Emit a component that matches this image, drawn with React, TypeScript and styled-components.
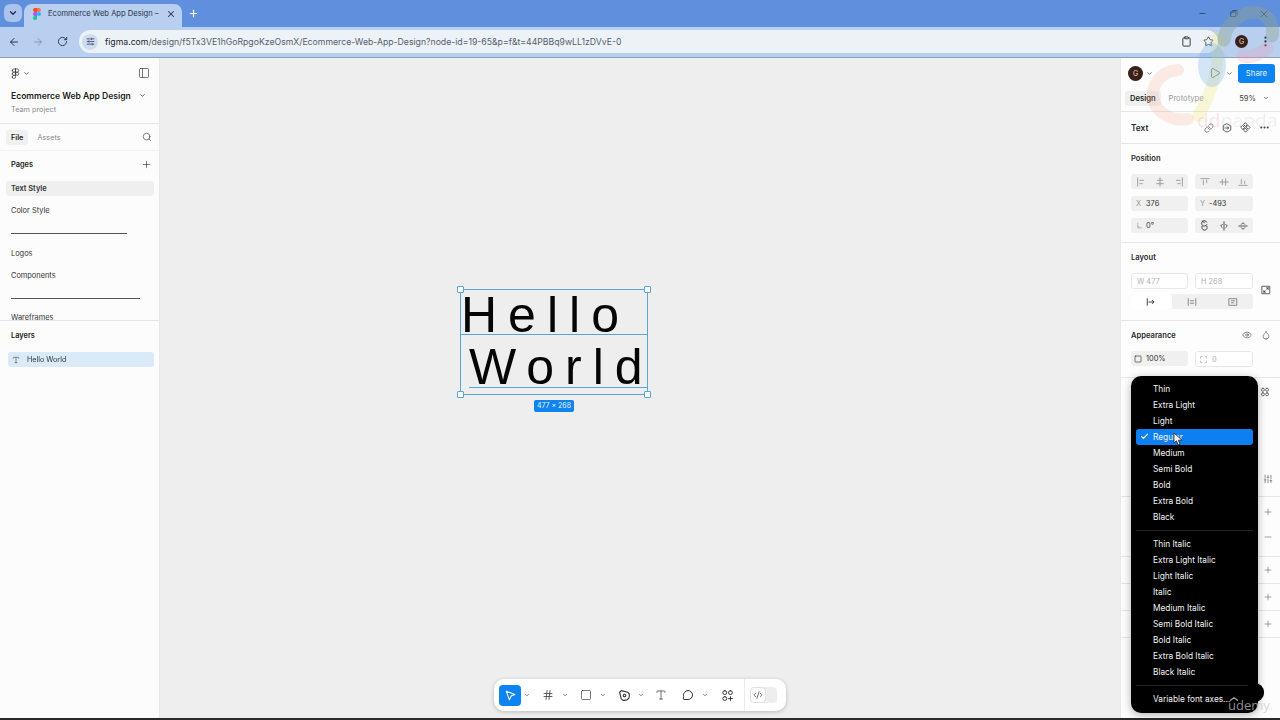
import React from "react";
import styled, { createGlobalStyle } from "styled-components";
import {
  ArrowLeft, ArrowRight, RotateCw, SlidersHorizontal, Clipboard, Star, EllipsisVertical,
  Minus, X, Plus, ChevronDown, Figma, PanelLeft, Search, Type, Play, Link, Ellipsis, Eye,
  Droplet, Check, SlidersVertical, Hash, Square, CodeXml,
} from "lucide-react";

const GlobalStyle = createGlobalStyle`
  html, body { margin: 0; padding: 0; width: 1280px; height: 720px; overflow: hidden; background: #eee; }
  #root { width: 1280px; height: 720px; }
  * { box-sizing: border-box; }
`;

const Page = styled.div`
  position: relative;
  width: 1280px;
  height: 720px;
  display: flex;
  flex-direction: column;
  overflow: hidden;
  font-family: Inter, "Liberation Sans", sans-serif;
  color: #222;
  filter: blur(0.35px);
`;

/* ---------- browser chrome ---------- */
const TabStrip = styled.div`
  height: 27px;
  background: #5f8fdd;
  display: flex;
  align-items: flex-end;
  padding: 0 1px 0 4px;
  flex: none;
`;
const TabMenu = styled.div`
  width: 18px;
  height: 18px;
  margin-bottom: 5px;
  border-radius: 6px;
  background: #a9c3ec;
  display: flex;
  align-items: center;
  justify-content: center;
  color: #1d2b45;
`;
const ActiveTab = styled.div`
  width: 158px;
  height: 23px;
  margin-left: 2px;
  padding: 0 6px 4px 9px;
  background: #b8cff0;
  border-radius: 8px 8px 0 0;
  display: flex;
  align-items: center;
  gap: 7px;
  font-size: 7.6px;
  color: #2a3446;
  white-space: nowrap;
`;
const TabTitle = styled.span`
  flex: 1;
`;
const NewTab = styled.div`
  margin: 0 0 8px 6px;
  color: #fff;
  display: flex;
`;
const WindowButtons = styled.div`
  margin-left: auto;
  display: flex;
  align-items: center;
  height: 27px;
  color: #2c3a55;
`;
const WindowButton = styled.div`
  width: 30.5px;
  display: flex;
  justify-content: center;
`;
const NavBar = styled.div`
  height: 31px;
  background: #b8cff0;
  border-bottom: 1px solid #8b9fc0;
  display: flex;
  align-items: center;
  flex: none;
  padding: 0 6px 1px 0;
`;
const NavButton = styled.div<{ $w: number; $muted?: boolean }>`
  width: ${(p) => p.$w}px;
  display: flex;
  justify-content: center;
  color: ${(p) => (p.$muted ? "#7b8aa5" : "#26344e")};
`;
const AddressBar = styled.div`
  margin-left: 3px;
  width: 1139px;
  height: 23px;
  border-radius: 12px;
  background: #edf2f7;
  display: flex;
  align-items: center;
  padding: 0 3px;
  font-size: 8.7px;
  color: #55606f;
  flex: none;
`;
const SiteChip = styled.div`
  width: 16px;
  height: 16px;
  border-radius: 50%;
  background: #cfdcee;
  display: flex;
  align-items: center;
  justify-content: center;
  color: #26344e;
  margin: 0 7px 0 0;
`;
const Host = styled.span`
  color: #1c2230;
`;
const BarIcons = styled.div`
  margin-left: auto;
  display: flex;
  align-items: center;
  gap: 11px;
  padding-right: 1px;
  color: #27303f;
`;
const Avatar = styled.div<{ $size: number }>`
  width: ${(p) => p.$size}px;
  height: ${(p) => p.$size}px;
  border-radius: 50%;
  background: #3a1f17;
  color: #e7d8cf;
  font-size: 7px;
  display: flex;
  align-items: center;
  justify-content: center;
  flex: none;
`;

/* ---------- workspace ---------- */
const Workspace = styled.div`
  flex: 1;
  display: flex;
  min-height: 0;
`;
const BottomEdge = styled.div`
  height: 2px;
  background: #2a2a2a;
  flex: none;
`;
const LeftPanel = styled.aside`
  width: 160px;
  flex: none;
  background: #fcfcfc;
  border-right: 1px solid #e8e8e8;
  display: flex;
  flex-direction: column;
`;
const LogoRow = styled.div`
  height: 30px;
  padding: 0 9px 0 10px;
  display: flex;
  align-items: center;
  color: #333;
`;
const PushRight = styled.div<{ $gap?: number }>`
  margin-left: auto;
  display: flex;
  align-items: center;
  gap: ${(p) => p.$gap ?? 8}px;
`;
const FileTitle = styled.div`
  height: 15px;
  padding: 0 13px 0 11px;
  display: flex;
  align-items: center;
  font-size: 8.55px;
  font-weight: 600;
  color: #1c1c1c;
  white-space: nowrap;
`;
const TeamName = styled.div`
  height: 14px;
  padding-left: 11px;
  font-size: 7.3px;
  line-height: 14px;
  color: #8a8a8a;
`;
const PanelTabs = styled.div`
  margin-top: 6px;
  height: 28px;
  border-top: 1px solid #e6e6e6;
  border-bottom: 1px solid #f1f1f1;
  padding: 0 7px 0 6px;
  display: flex;
  align-items: center;
  font-size: 7.3px;
  color: #8a8a8a;
`;
const PanelTab = styled.div<{ $active?: boolean }>`
  height: 15px;
  padding: 0 5px;
  margin-right: 4px;
  border-radius: 3px;
  display: flex;
  align-items: center;
  font-weight: ${(p) => (p.$active ? 600 : 400)};
  background: ${(p) => (p.$active ? "#f0f0f0" : "transparent")};
  color: ${(p) => (p.$active ? "#222" : "#8a8a8a")};
`;
const SideHeading = styled.div<{ $h: number }>`
  height: ${(p) => p.$h}px;
  padding: 0 7px 0 11px;
  display: flex;
  align-items: center;
  font-size: 7.4px;
  font-weight: 600;
  color: #222;
`;
const PageList = styled.div`
  height: 143px;
  overflow: hidden;
  padding: 3px 5px 0 6px;
  border-bottom: 1px solid #e6e6e6;
  display: flex;
  flex-direction: column;
`;
const PageItem = styled.div<{ $active?: boolean }>`
  height: 15px;
  flex: none;
  margin-bottom: 7px;
  padding-left: 5px;
  border-radius: 3px;
  font-size: 7.4px;
  line-height: 15px;
  font-weight: ${(p) => (p.$active ? 600 : 400)};
  background: ${(p) => (p.$active ? "#efefef" : "transparent")};
  color: #333;
`;
const PageRule = styled.div<{ $w: number }>`
  width: ${(p) => p.$w}px;
  height: 1px;
  flex: none;
  margin: 8px 0 11.5px 5px;
  background: #555;
`;
const LayerRow = styled.div`
  height: 15px;
  margin: 3px 5px 0 8px;
  padding-left: 4px;
  border-radius: 3px;
  background: #daeaf8;
  display: flex;
  align-items: center;
  gap: 7px;
  font-size: 7.2px;
  color: #333;
`;

/* ---------- canvas ---------- */
const Canvas = styled.main`
  flex: 1;
  position: relative;
  background: #eeeeee;
`;
const TextNode = styled.div`
  position: absolute;
  left: 300px;
  top: 231px;
  width: 188px;
  height: 106px;
  border: 1px solid #58a5d6;
  font-family: "Liberation Sans", Arial, sans-serif;
  font-size: 50px;
  color: #050505;
`;
const TextLine = styled.div<{ $indent: number; $h: number; $drop: number }>`
  height: ${(p) => p.$h}px;
  margin-left: ${(p) => p.$indent}px;
  line-height: ${(p) => p.$h + p.$drop * 2}px;
  letter-spacing: 11px;
  white-space: nowrap;
  border-bottom: 1px solid #58a5d6;
`;
const Handle = styled.span<{ $x: "l" | "r"; $y: "t" | "b" }>`
  position: absolute;
  width: 7px;
  height: 7px;
  background: #fff;
  border: 1px solid #58a5d6;
  border-radius: 1px;
  ${(p) => (p.$x === "l" ? "left: -4px;" : "right: -4px;")}
  ${(p) => (p.$y === "t" ? "top: -4px;" : "bottom: -4px;")}
`;
const SizeTag = styled.div`
  position: absolute;
  left: 73px;
  top: 110px;
  width: 40px;
  height: 12px;
  border-radius: 2px;
  background: #0d84ef;
  color: #e8f3ff;
  font-family: Inter, sans-serif;
  font-size: 7px;
  line-height: 12px;
  text-align: center;
`;
const ToolBar = styled.div`
  position: absolute;
  left: 50%;
  bottom: 7px;
  transform: translateX(-50%);
  width: 292px;
  height: 32px;
  padding: 0 8px 0 5px;
  background: #fff;
  border-radius: 10px;
  box-shadow: 0 1px 4px rgba(0, 0, 0, 0.22);
  display: flex;
  align-items: center;
  color: #333;
`;
const ToolGroup = styled.div<{ $w: number }>`
  width: ${(p) => p.$w}px;
  display: flex;
  align-items: center;
  flex: none;
`;
const ToolIcon = styled.div<{ $active?: boolean }>`
  width: 22px;
  height: 21px;
  border-radius: 4px;
  display: flex;
  align-items: center;
  justify-content: center;
  flex: none;
  background: ${(p) => (p.$active ? "#0d84ef" : "transparent")};
  color: ${(p) => (p.$active ? "#fff" : "#333")};
`;
const ToolChevron = styled.div`
  width: 11px;
  display: flex;
  justify-content: center;
  color: #555;
`;
const ToolDivider = styled.div`
  width: 1px;
  height: 32px;
  background: #ececec;
  margin: 0 5px 0 6px;
  flex: none;
`;
const CodeToggle = styled.div`
  width: 27px;
  height: 16px;
  border-radius: 4px;
  background: #eee;
  flex: none;
`;
const CodeKnob = styled.div`
  width: 16px;
  height: 16px;
  border-radius: 4px;
  background: #fff;
  border: 1px solid #e0e0e0;
  display: flex;
  align-items: center;
  justify-content: center;
  color: #333;
`;

/* ---------- right panel ---------- */
const RightPanel = styled.aside`
  width: 160px;
  flex: none;
  position: relative;
  background: #fdfdfd;
  border-left: 1px solid #e8e8e8;
  display: flex;
  flex-direction: column;
`;
const TopActions = styled.div`
  height: 30px;
  padding: 0 5px 0 7px;
  display: flex;
  align-items: center;
  gap: 3px;
  color: #444;
`;
const ShareButton = styled.div`
  width: 37px;
  height: 19px;
  border-radius: 3px;
  background: #0d84ef;
  color: #e6f3ff;
  font-size: 7.8px;
  display: flex;
  align-items: center;
  justify-content: center;
`;
const ModeTabs = styled.div`
  height: 24px;
  padding: 0 11px 3px 4px;
  display: flex;
  align-items: center;
  border-bottom: 1px solid #e6e6e6;
  font-size: 7.6px;
  color: #444;
`;
const ModeTab = styled.div<{ $active?: boolean }>`
  height: 15px;
  padding: 0 5px;
  margin-right: 3px;
  border-radius: 3px;
  display: flex;
  align-items: center;
  font-weight: ${(p) => (p.$active ? 600 : 400)};
  background: ${(p) => (p.$active ? "#f0f0f0" : "transparent")};
  color: ${(p) => (p.$active ? "#222" : "#999")};
`;
const SelectionRow = styled.div`
  height: 32px;
  padding: 0 10px 0 10px;
  display: flex;
  align-items: center;
  border-bottom: 1px solid #e6e6e6;
  font-size: 8.3px;
  font-weight: 600;
  color: #2a2a2a;
`;
const SelectionIcons = styled.div`
  margin-left: auto;
  display: flex;
  align-items: center;
  gap: 8px;
  color: #444;
`;
const Section = styled.section<{ $h: number }>`
  height: ${(p) => p.$h}px;
  padding: 7px 6px 0 10px;
  border-bottom: 1px solid #e6e6e6;
  flex: none;
`;
const SectionTitle = styled.div`
  height: 14px;
  display: flex;
  align-items: center;
  font-size: 7.6px;
  font-weight: 600;
  color: #2a2a2a;
`;
const FieldGrid = styled.div<{ $top: number }>`
  display: grid;
  grid-template-columns: 57px 58px;
  column-gap: 7px;
  row-gap: 7px;
  margin-top: ${(p) => p.$top}px;
`;
const SegGroup = styled.div`
  height: 15px;
  border-radius: 3px;
  background: #f0f0f0;
  display: grid;
  grid-template-columns: repeat(3, 1fr);
  align-items: center;
  justify-items: center;
  color: #8f8f8f;
`;
const DarkSegGroup = styled(SegGroup)`
  color: #333;
`;
const Field = styled.div<{ $outlined?: boolean; $dim?: boolean; $pad?: number; $gap?: number }>`
  height: ${(p) => (p.$outlined ? 16 : 15)}px;
  border-radius: 3px;
  padding-left: ${(p) => p.$pad ?? 5}px;
  display: flex;
  align-items: center;
  gap: ${(p) => p.$gap ?? 5}px;
  font-size: 7.4px;
  background: ${(p) => (p.$outlined ? "#fff" : "#f0f0f0")};
  border: ${(p) => (p.$outlined ? "1px solid #e8e8e8" : "none")};
  color: ${(p) => (p.$dim ? "#b0b0b0" : "#333")};
`;
const FieldTag = styled.span`
  color: #999;
  display: flex;
`;
const RowWithAside = styled.div`
  position: relative;
  width: 122px;
`;
const Aside = styled.div<{ $top: number }>`
  position: absolute;
  right: -18px;
  top: ${(p) => p.$top}px;
  color: #444;
  display: flex;
`;
const LayoutSeg = styled.div`
  width: 122px;
  height: 15px;
  margin-top: 5px;
  border-radius: 3px;
  background: #f0f0f0;
  display: grid;
  grid-template-columns: repeat(3, 1fr);
  align-items: center;
  justify-items: center;
  color: #777;
`;
const LayoutOption = styled.div<{ $active?: boolean }>`
  width: 100%;
  height: 100%;
  border-radius: 3px;
  display: flex;
  align-items: center;
  justify-content: center;
  background: ${(p) => (p.$active ? "#fff" : "transparent")};
  color: ${(p) => (p.$active ? "#222" : "#777")};
`;
const AppearanceIcons = styled.div`
  margin-left: auto;
  margin-right: 3px;
  display: flex;
  align-items: center;
  gap: 9px;
  color: #444;
`;
const StackedIcons = styled.div<{ $top: number; $gap: number }>`
  display: flex;
  flex-direction: column;
  align-items: flex-end;
  padding: ${(p) => p.$top}px 1px 0 0;
  gap: ${(p) => p.$gap}px;
  color: #555;
`;
const AppsIcon = styled.div`
  margin-right: 3px;
  display: flex;
`;

/* ---------- font-style menu ---------- */
const StyleMenu = styled.div`
  position: absolute;
  left: 10px;
  top: 318px;
  width: 127px;
  height: 337px;
  padding: 5px 0 6px;
  border-radius: 10px;
  background: #000;
  box-shadow: 0 2px 8px rgba(0, 0, 0, 0.3);
  color: #f2f2f2;
  font-size: 8.3px;
`;
const MenuItem = styled.div<{ $selected?: boolean }>`
  position: relative;
  height: 16px;
  margin: 0 5px;
  padding-left: 17px;
  line-height: 16px;
  border-radius: 3px;
  white-space: nowrap;
  background: ${(p) => (p.$selected ? "#0d7ff0" : "transparent")};
`;
const MenuCheck = styled.span`
  position: absolute;
  left: 4px;
  top: 3px;
  display: flex;
  color: #fff;
`;
const MenuRule = styled.div`
  height: 1px;
  margin: 5px 5px 5.2px;
  background: #242424;
`;
const Cursor = styled.svg`
  position: absolute;
  left: 1173px;
  top: 432px;
`;

/* ---------- video watermarks ---------- */
const LogoMark = styled.svg`
  position: absolute;
  left: 1140px;
  top: 0;
  pointer-events: none;
`;
const BrandText = styled.div`
  position: absolute;
  left: 1197px;
  top: 109px;
  font-family: "Open Sans", sans-serif;
  font-size: 19px;
  line-height: 22px;
  letter-spacing: 0.2px;
  pointer-events: none;
`;
const BrandDd = styled.span`
  color: rgba(240, 120, 120, 0.2);
`;
const BrandRest = styled.span`
  color: rgba(120, 120, 120, 0.11);
`;
const UdemyBump = styled.div`
  position: absolute;
  left: 1245px;
  top: 683px;
  width: 19px;
  height: 19px;
  border-radius: 9px;
  background: #000;
`;
const UdemyMark = styled.div`
  position: absolute;
  left: 1228px;
  top: 697px;
  font-family: "Open Sans", sans-serif;
  font-size: 13px;
  line-height: 16px;
  color: rgba(200, 200, 200, 0.72);
`;
const UdemyHat = styled.svg`
  position: absolute;
  left: 1229px;
  top: 697px;
`;

/* ---------- small drawn icons ---------- */
const Glyph: React.FC<{ d: string; size?: number; vb?: number; sw?: number }> = ({ d, size = 10, vb = 12, sw = 1 }) => (
  <svg width={size} height={size} viewBox={`0 0 ${vb} ${vb}`} fill="none" stroke="currentColor" strokeWidth={sw} strokeLinecap="round" strokeLinejoin="round">
    <path d={d} />
  </svg>
);

const FigmaFavicon = () => (
  <svg width="8" height="12" viewBox="0 0 8 12">
    <path d="M0 2a2 2 0 0 1 2-2h2v4H2a2 2 0 0 1-2-2z" fill="#f24e1e" />
    <path d="M4 0h2a2 2 0 0 1 0 4H4z" fill="#ff7262" />
    <path d="M0 6a2 2 0 0 1 2-2h2v4H2a2 2 0 0 1-2-2z" fill="#a259ff" />
    <circle cx="6" cy="6" r="2" fill="#1abcfe" />
    <path d="M0 10a2 2 0 0 1 2-2h2v2a2 2 0 0 1-4 0z" fill="#0acf83" />
  </svg>
);

const RESTORE = "M3 4h6v6H3z M5 2h5a1 1 0 0 1 1 1v5";
const ICONS = {
  alignL: "M2 1v10 M4.5 4H9 M4.5 8H7.5",
  alignC: "M6 1v10 M3 4h6 M2 8h8",
  alignR: "M10 1v10 M3 4h4.5 M4.5 8h3",
  alignT: "M1 2h10 M4 4v5 M8 4v3",
  alignM: "M1 6h10 M4 3v6 M8 2v8",
  alignB: "M1 10h10 M4 3v5 M8 5v3",
  angle: "M3 2v8h7 M3 7a3 3 0 0 1 3 3",
  rotate: "M3.5 1 6 3 M8.6 2.4A3 3 0 1 0 8.6 5 M3.4 6.6a3 3 0 1 0 5.2 0",
  flipH: "M6 1v10 M4 4 2 6l2 2 M8 4l2 2-2 2",
  flipV: "M1 6h10 M4 4l2-2 2 2 M4 8l2 2 2-2",
  resize: "M1.5 1.5h9v9h-9z M3.5 8.5l1.5-1.5 M3.5 8.5h2 M3.5 8.5v-2 M8.5 3.5 7 5 M8.5 3.5h-2 M8.5 3.5v2",
  hug: "M1.5 2v8 M3.5 6h6 M7.5 4l2 2-2 2",
  fill: "M1.5 2v8 M10.5 2v8 M4 4.5h4 M4 7.5h4",
  fixed: "M1.5 2h9v8h-9z M4 4.5h4 M4 7h3",
  opacity: "M2.5 1.5h7a1 1 0 0 1 1 1v7a1 1 0 0 1-1 1h-7a1 1 0 0 1-1-1v-7a1 1 0 0 1 1-1z",
  corners: "M2 4V2h2 M8 2h2v2 M10 8v2H8 M4 10H2V8",
  apps: "M3.5 1.5a1.8 1.8 0 1 1 0 3.6a1.8 1.8 0 1 1 0-3.6z M8.5 1.5a1.8 1.8 0 1 1 0 3.6a1.8 1.8 0 1 1 0-3.6z M3.5 6.9a1.8 1.8 0 1 1 0 3.6a1.8 1.8 0 1 1 0-3.6z M8.5 6.9a1.8 1.8 0 1 1 0 3.6a1.8 1.8 0 1 1 0-3.6z",
  detach: "M6 1 10.5 3.5v5L6 11 1.5 8.5v-5z M3.5 6H8 M6.5 4.5 8 6 6.5 7.5",
  comp: "M6 1 8 3 6 5 4 3z M3 4 5 6 3 8 1 6z M9 4l2 2-2 2-2-2z M6 7l2 2-2 2-2-2z",
  bubble: "M6 1.5a4.5 4.5 0 0 1 0 9H2c-.6 0-.8-.5-.7-1l.4-2A4.5 4.5 0 0 1 6 1.5z",
  pen: "M3 1.5 9 3a3 3 0 0 1 1.5 3L10 8.5 8.5 10 6 10.5A3 3 0 0 1 3 9L1.5 3z M6 6m-1.2 0a1.2 1.2 0 1 0 2.4 0a1.2 1.2 0 1 0-2.4 0",
  widgets: "M3.5 1.5a1.8 1.8 0 1 1 0 3.6a1.8 1.8 0 1 1 0-3.6z M8.7 1.5a1.8 1.8 0 1 1 0 3.6a1.8 1.8 0 1 1 0-3.6z M3.5 7a1.8 1.8 0 1 1 0 3.6a1.8 1.8 0 1 1 0-3.6z M8.7 7v3.6 M6.9 8.8h3.6",
  pointer: "M2 2l8 3-3.4 1.4L5 10z",
};

const App: React.FC = () => {
  const upright = ["Thin", "Extra Light", "Light", "Regular", "Medium", "Semi Bold", "Bold", "Extra Bold", "Black"];
  const italic = ["Thin Italic", "Extra Light Italic", "Light Italic", "Italic", "Medium Italic", "Semi Bold Italic", "Bold Italic", "Extra Bold Italic", "Black Italic"];
  return (
    <Page>
      <GlobalStyle />
      <TabStrip>
        <TabMenu><ChevronDown size={10} strokeWidth={3} /></TabMenu>
        <ActiveTab>
          <FigmaFavicon />
          <TabTitle>Ecommerce Web App Design –</TabTitle>
          <X size={10} strokeWidth={2.5} />
        </ActiveTab>
        <NewTab><Plus size={11} strokeWidth={2.5} /></NewTab>
        <WindowButtons>
          <WindowButton><Minus size={9} /></WindowButton>
          <WindowButton><Glyph d={RESTORE} size={9} /></WindowButton>
          <WindowButton><X size={12} strokeWidth={1.5} /></WindowButton>
        </WindowButtons>
      </TabStrip>
      <NavBar>
        <NavButton $w={28}><ArrowLeft size={12} strokeWidth={2} /></NavButton>
        <NavButton $w={20} $muted><ArrowRight size={12} strokeWidth={1.6} /></NavButton>
        <NavButton $w={28}><RotateCw size={11} strokeWidth={2} /></NavButton>
        <AddressBar>
          <SiteChip><SlidersHorizontal size={9} strokeWidth={2} /></SiteChip>
          <Host>figma.com</Host>/design/f5Tx3VE1hGoRpgoKzeOsmX/Ecommerce-Web-App-Design?node-id=19-65&amp;p=f&amp;t=44PBBq9wLL1zDVvE-0
          <BarIcons>
            <Clipboard size={11} />
            <Star size={11} strokeWidth={1.6} />
          </BarIcons>
        </AddressBar>
        <PushRight>
          <Avatar $size={13}>G</Avatar>
          <NavButton $w={18}><EllipsisVertical size={13} strokeWidth={2.2} /></NavButton>
        </PushRight>
      </NavBar>

      <Workspace>
        <LeftPanel>
          <LogoRow>
            <Figma size={11} strokeWidth={1.5} />
            <ChevronDown size={7} strokeWidth={2.5} style={{ marginLeft: 2 }} />
            <PushRight><PanelLeft size={12} strokeWidth={1.3} /></PushRight>
          </LogoRow>
          <FileTitle>
            Ecommerce Web App Design
            <PushRight><ChevronDown size={7} strokeWidth={2.5} /></PushRight>
          </FileTitle>
          <TeamName>Team project</TeamName>
          <PanelTabs>
            <PanelTab $active>File</PanelTab>
            <PanelTab>Assets</PanelTab>
            <PushRight><Search size={10} strokeWidth={1.5} color="#333" /></PushRight>
          </PanelTabs>
          <SideHeading $h={27}>
            Pages
            <PushRight><Plus size={11} strokeWidth={1.3} /></PushRight>
          </SideHeading>
          <PageList>
            <PageItem $active>Text Style</PageItem>
            <PageItem>Color Style</PageItem>
            <PageRule $w={116} />
            <PageItem>Logos</PageItem>
            <PageItem>Components</PageItem>
            <PageRule $w={129} />
            <PageItem>Wareframes</PageItem>
          </PageList>
          <SideHeading $h={28}>Layers</SideHeading>
          <LayerRow>
            <Type size={8} strokeWidth={1.5} />
            Hello World
          </LayerRow>
        </LeftPanel>

        <Canvas>
          <TextNode>
            <TextLine $indent={0} $h={45} $drop={3}>Hello</TextLine>
            <TextLine $indent={8} $h={53} $drop={6}>World</TextLine>
            <Handle $x="l" $y="t" />
            <Handle $x="r" $y="t" />
            <Handle $x="l" $y="b" />
            <Handle $x="r" $y="b" />
            <SizeTag>477 × 268</SizeTag>
          </TextNode>
          <ToolBar>
            <ToolGroup $w={38}>
              <ToolIcon $active><Glyph d={ICONS.pointer} size={13} /></ToolIcon>
              <ToolChevron><ChevronDown size={6} strokeWidth={3} /></ToolChevron>
            </ToolGroup>
            <ToolGroup $w={38}>
              <ToolIcon><Hash size={12} strokeWidth={1.5} /></ToolIcon>
              <ToolChevron><ChevronDown size={6} strokeWidth={3} /></ToolChevron>
            </ToolGroup>
            <ToolGroup $w={38}>
              <ToolIcon><Square size={12} strokeWidth={1.3} /></ToolIcon>
              <ToolChevron><ChevronDown size={6} strokeWidth={3} /></ToolChevron>
            </ToolGroup>
            <ToolGroup $w={37}>
              <ToolIcon><Glyph d={ICONS.pen} size={13} /></ToolIcon>
              <ToolChevron><ChevronDown size={6} strokeWidth={3} /></ToolChevron>
            </ToolGroup>
            <ToolGroup $w={27}>
              <ToolIcon><Type size={12} strokeWidth={1.4} /></ToolIcon>
            </ToolGroup>
            <ToolGroup $w={39}>
              <ToolIcon><Glyph d={ICONS.bubble} size={12} /></ToolIcon>
              <ToolChevron><ChevronDown size={6} strokeWidth={3} /></ToolChevron>
            </ToolGroup>
            <ToolGroup $w={22}>
              <ToolIcon><Glyph d={ICONS.widgets} size={13} sw={0.9} /></ToolIcon>
            </ToolGroup>
            <ToolDivider />
            <CodeToggle>
              <CodeKnob><CodeXml size={10} strokeWidth={1.6} /></CodeKnob>
            </CodeToggle>
          </ToolBar>
        </Canvas>

        <RightPanel>
          <TopActions>
            <Avatar $size={15}>G</Avatar>
            <ChevronDown size={7} strokeWidth={2.5} />
            <PushRight $gap={5}>
              <Play size={12} strokeWidth={1.4} />
              <ChevronDown size={7} strokeWidth={2.5} />
              <ShareButton>Share</ShareButton>
            </PushRight>
          </TopActions>
          <ModeTabs>
            <ModeTab $active>Design</ModeTab>
            <ModeTab>Prototype</ModeTab>
            <PushRight $gap={7}>59%<ChevronDown size={6} strokeWidth={3} /></PushRight>
          </ModeTabs>
          <SelectionRow>
            Text
            <SelectionIcons>
              <Link size={10} strokeWidth={1.5} />
              <Glyph d={ICONS.detach} size={10} />
              <Glyph d={ICONS.comp} size={11} />
              <Ellipsis size={11} strokeWidth={2.5} />
            </SelectionIcons>
          </SelectionRow>
          <Section $h={99}>
            <SectionTitle>Position</SectionTitle>
            <FieldGrid $top={9}>
              <SegGroup>
                <Glyph d={ICONS.alignL} />
                <Glyph d={ICONS.alignC} />
                <Glyph d={ICONS.alignR} />
              </SegGroup>
              <SegGroup>
                <Glyph d={ICONS.alignT} />
                <Glyph d={ICONS.alignM} />
                <Glyph d={ICONS.alignB} />
              </SegGroup>
              <Field><FieldTag>X</FieldTag>376</Field>
              <Field $gap={4}><FieldTag>Y</FieldTag>-493</Field>
              <Field $gap={3}><FieldTag><Glyph d={ICONS.angle} size={7} /></FieldTag>0°</Field>
              <DarkSegGroup>
                <Glyph d={ICONS.rotate} size={11} />
                <Glyph d={ICONS.flipH} />
                <Glyph d={ICONS.flipV} />
              </DarkSegGroup>
            </FieldGrid>
          </Section>
          <Section $h={78}>
            <SectionTitle>Layout</SectionTitle>
            <RowWithAside>
              <FieldGrid $top={9}>
                <Field $outlined $dim>W 477</Field>
                <Field $outlined $dim>H 268</Field>
              </FieldGrid>
              <Aside $top={12}><Glyph d={ICONS.resize} /></Aside>
            </RowWithAside>
            <LayoutSeg>
              <LayoutOption $active><Glyph d={ICONS.hug} /></LayoutOption>
              <LayoutOption><Glyph d={ICONS.fill} /></LayoutOption>
              <LayoutOption><Glyph d={ICONS.fixed} /></LayoutOption>
            </LayoutSeg>
          </Section>
          <Section $h={57}>
            <SectionTitle>
              Appearance
              <AppearanceIcons>
                <Eye size={10} strokeWidth={1.4} />
                <Droplet size={10} strokeWidth={1.4} />
              </AppearanceIcons>
            </SectionTitle>
            <FieldGrid $top={9}>
              <Field $pad={3} $gap={4}><Glyph d={ICONS.opacity} size={8} />100%</Field>
              <Field $outlined $dim $pad={3} $gap={4}><Glyph d={ICONS.corners} size={9} />0</Field>
            </FieldGrid>
          </Section>
          <Section $h={119}>
            <StackedIcons $top={2} $gap={77}>
              <AppsIcon><Glyph d={ICONS.apps} /></AppsIcon>
              <SlidersVertical size={10} strokeWidth={1.5} />
            </StackedIcons>
          </Section>
          <Section $h={60}>
            <StackedIcons $top={3} $gap={15}>
              <Plus size={10} strokeWidth={1.3} />
              <Minus size={10} strokeWidth={1.3} />
            </StackedIcons>
          </Section>
          <Section $h={27}><StackedIcons $top={1} $gap={0}><Plus size={10} strokeWidth={1.3} /></StackedIcons></Section>
          <Section $h={27}><StackedIcons $top={1} $gap={0}><Plus size={10} strokeWidth={1.3} /></StackedIcons></Section>
          <Section $h={27}><StackedIcons $top={1} $gap={0}><Plus size={10} strokeWidth={1.3} /></StackedIcons></Section>

          <StyleMenu>
            {upright.map((name) => (
              <MenuItem key={name} $selected={name === "Regular"}>
                {name === "Regular" && <MenuCheck><Check size={9} strokeWidth={3} /></MenuCheck>}
                {name}
              </MenuItem>
            ))}
            <MenuRule />
            {italic.map((name) => (
              <MenuItem key={name}>{name}</MenuItem>
            ))}
            <MenuRule />
            <MenuItem>Variable font axes...</MenuItem>
          </StyleMenu>
        </RightPanel>
      </Workspace>
      <BottomEdge />

      <Cursor width="10" height="14" viewBox="0 0 10 14">
        <path d="M1 1v10l2.5-2.2L5.2 13l1.8-.8-1.7-4H9z" fill="#fff" stroke="#222" strokeWidth="0.8" />
      </Cursor>
      <LogoMark width="140" height="140" viewBox="0 0 140 140" fill="none" strokeLinecap="round">
        <path d="M38 70C16 72 8 92 16 106c8 12 22 15 32 13" stroke="#f6a58c" strokeOpacity=".22" strokeWidth="12" />
        <path d="M78 38c2 26-6 56-20 78" stroke="#e6e36a" strokeOpacity=".26" strokeWidth="12" />
        <ellipse cx="72" cy="65" rx="14" ry="22" fill="#6aa8e8" fillOpacity=".28" />
        <path d="M84 40c2-20 24-32 38-26 9 4 12 14 10 22" stroke="#8ea58f" strokeOpacity=".42" strokeWidth="13" />
        <path d="M103 56c10 2 17-2 24-8" stroke="#f49ab0" strokeOpacity=".26" strokeWidth="13" />
      </LogoMark>
      <BrandText><BrandDd>dd</BrandDd><BrandRest>panda</BrandRest></BrandText>
      <UdemyBump />
      <UdemyMark>udemy</UdemyMark>
      <UdemyHat width="10" height="4" viewBox="0 0 10 4" fill="none" stroke="rgba(200,200,200,.8)" strokeWidth="1.3">
        <path d="M1 3.5 5 .8l4 2.7" />
      </UdemyHat>
    </Page>
  );
};

export default App;
